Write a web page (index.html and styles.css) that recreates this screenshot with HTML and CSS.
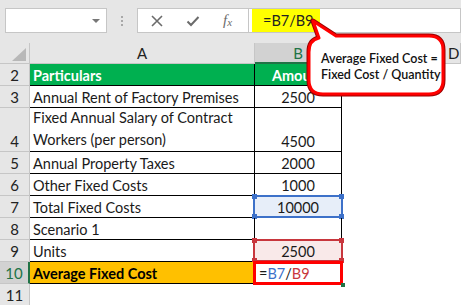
FILE: index.html
```html
<!DOCTYPE html>
<html>
<head>
<meta charset="utf-8">
<link rel="stylesheet" href="styles.css">
</head>
<body>
<div class="app">
  <div class="toolbar">
    <div class="namebox"><span class="dd"></span></div>
    <div class="dots"><i></i><i></i><i></i></div>
    <div class="iconbox">
      <svg class="ic" width="14" height="14" viewBox="0 0 14 14"><path d="M2 2 L12 12 M12 2 L2 12" stroke="#6b6b6b" stroke-width="1.6" fill="none"/></svg>
      <svg class="ic" width="14" height="14" viewBox="0 0 14 14"><path d="M1.5 7.5 L5 11 L12.5 3" stroke="#6b6b6b" stroke-width="2" fill="none"/></svg>
      <span class="fx">f<sub>x</sub></span>
    </div>
    <div class="formula"><span class="hl">=B7/B9</span></div>
  </div>
  <div class="sheet">
    <div class="corner"><span class="tri"></span></div>
    <div class="ch">A</div>
    <div class="ch sel">B</div>
    <div class="ch"></div>
    <div class="ch d">D</div>

    <div class="rh">2</div>
    <div class="c a green">Particulars</div>
    <div class="c b green ctr">Amount</div>
    <div class="e"></div><div class="e"></div>

    <div class="rh">3</div>
    <div class="c a">Annual Rent of Factory Premises</div>
    <div class="c b ctr">2500</div>
    <div class="e"></div><div class="e"></div>

    <div class="rh">4</div>
    <div class="c a two">Fixed Annual Salary of Contract<br>Workers (per person)</div>
    <div class="c b ctr">4500</div>
    <div class="e"></div><div class="e"></div>

    <div class="rh">5</div>
    <div class="c a">Annual Property Taxes</div>
    <div class="c b ctr">2000</div>
    <div class="e"></div><div class="e"></div>

    <div class="rh">6</div>
    <div class="c a">Other Fixed Costs</div>
    <div class="c b ctr">1000</div>
    <div class="e"></div><div class="e"></div>

    <div class="rh">7</div>
    <div class="c a">Total Fixed Costs</div>
    <div class="c b ctr ref blue">10000<i class="k tl"></i><i class="k tr"></i><i class="k bl"></i><i class="k br"></i></div>
    <div class="e"></div><div class="e"></div>

    <div class="rh">8</div>
    <div class="c a">Scenario 1</div>
    <div class="c b ctr"></div>
    <div class="e"></div><div class="e"></div>

    <div class="rh">9</div>
    <div class="c a">Units</div>
    <div class="c b ctr ref pink">2500<i class="k tl"></i><i class="k tr"></i><i class="k bl"></i><i class="k br"></i></div>
    <div class="e"></div><div class="e"></div>

    <div class="rh sel">10</div>
    <div class="c a orange">Average Fixed Cost</div>
    <div class="c b active">=<span class="cb">B7</span>/<span class="cr">B9</span><i class="fh"></i></div>
    <div class="e"></div><div class="e"></div>

    <div class="rh">11</div>
    <div class="e"></div><div class="e"></div><div class="e"></div><div class="e"></div>
  </div>

  <div class="callout">
    <svg class="bubble" width="461" height="305" viewBox="0 0 461 305">
      <path d="M336 36 L429 36 Q443 36 443 50 L443 80 Q443 94 429 94 L323 94 Q309 94 309 80 L309 52 Q309 40 319 38 L313 21 Z" fill="#fff" stroke="#9a0000" stroke-width="5" stroke-linejoin="round"/>
      <path d="M336 36 L429 36 Q443 36 443 50 L443 80 Q443 94 429 94 L323 94 Q309 94 309 80 L309 52 Q309 40 319 38 L313 21 Z" fill="#fff" stroke="#ff0000" stroke-width="3" stroke-linejoin="round"/>
    </svg>
    <div class="ctext">Average Fixed Cost =<br>Fixed Cost / Quantity</div>
  </div>
</div>
</body>
</html>
```

FILE: styles.css
```css
* { box-sizing: border-box; }
html, body { margin: 0; padding: 0; }
body {
  width: 461px;
  height: 305px;
  overflow: hidden;
  background: #fff;
  font-family: "Lato", "Liberation Sans", sans-serif;
}
.app { position: relative; width: 461px; height: 305px; overflow: hidden; }

.toolbar {
  height: 43px;
  background: #e6e6e6;
  padding: 8px 0 10px 5px;
  display: flex;
  align-items: stretch;
}
.namebox {
  width: 102px;
  background: #fff;
  border: 1px solid #c6c6c6;
  display: flex;
  justify-content: flex-end;
  align-items: center;
  padding-right: 6px;
}
.dd {
  width: 0; height: 0;
  border-left: 4px solid transparent;
  border-right: 4px solid transparent;
  border-top: 4px solid #777;
}
.dots {
  width: 30px;
  display: flex;
  flex-direction: column;
  align-items: center;
  justify-content: center;
  gap: 2px;
}
.dots i { width: 2px; height: 2px; background: #a8a8a8; display: block; }
.iconbox {
  width: 111px;
  background: #fff;
  border: 1px solid #c6c6c6;
  border-right: none;
  display: flex;
  align-items: center;
  padding-left: 12px;
  gap: 22px;
}
.fx {
  font-family: "Liberation Serif", serif;
  font-style: italic;
  font-size: 15px;
  color: #6b6b6b;
  margin-left: 1px;
}
.fx sub { font-size: 11px; vertical-align: -1px; }
.formula {
  flex: 1;
  background: #fff;
  border: 1px solid #c6c6c6;
  padding-left: 3px;
  display: flex;
}
.hl {
  background: #ffff00;
  width: 68px;
  padding-left: 11px;
  display: flex;
  align-items: center;
  font-size: 14.5px;
  color: #222;
}

.sheet {
  display: grid;
  grid-template-columns: 30px 225px 87px 80px 1fr;
  grid-template-rows: 21px 22px 22px 44px 22px 22px 22px 22px 22px 22px 22px;
  font-size: 14.5px;
  color: #1a1a1a;
}
.corner {
  background: #e6e6e6;
  border-right: 1px solid #c6c6c6;
  border-bottom: 1px solid #c6c6c6;
  position: relative;
}
.tri {
  position: absolute;
  right: 3px; bottom: 2px;
  width: 0; height: 0;
  border-left: 14px solid transparent;
  border-bottom: 13px solid #b8b8b8;
}
.ch {
  background: #e6e6e6;
  border-right: 1px solid #c6c6c6;
  border-bottom: 1px solid #c6c6c6;
  display: flex;
  align-items: center;
  justify-content: center;
  color: #222;
  font-size: 15px;
}
.ch.sel { background: #d2d2d2; color: #217346; border-bottom: 2px solid #217346; }
.ch.d { justify-content: flex-start; padding-left: 26px; }
.rh {
  background: #e6e6e6;
  border-right: 1px solid #c6c6c6;
  border-bottom: 1px solid #c6c6c6;
  display: flex;
  align-items: flex-end;
  justify-content: center;
  padding-bottom: 1px;
  font-size: 15px;
  color: #222;
}
.rh.sel { background: #d2d2d2; color: #217346; border-right: 2px solid #217346; }
.c {
  border-right: 1px solid #000;
  border-bottom: 1px solid #000;
  display: flex;
  align-items: flex-end;
  padding: 0 0 1px 3px;
  white-space: nowrap;
  overflow: hidden;
  position: relative;
}
.c.two { line-height: 22px; padding-bottom: 0; }
.c.ctr { justify-content: center; padding-left: 0; }
.green { background: #00b050; color: #fff; font-weight: bold; }
.orange { background: #ffc000; color: #000; font-weight: bold; }
.e { background: #fff; }

.ref { overflow: visible; }
.ref::before {
  content: "";
  position: absolute;
  left: -2px; top: -1px; right: -2px; bottom: -1px;
  border: 2px solid;
}
.blue { background: #e7eef9; }
.blue::before { border-color: #3d71c9; }
.pink { background: #f9e9e9; }
.pink::before { border-color: #c8363d; }
.k { position: absolute; width: 5px; height: 5px; display: block; }
.blue .k { background: #3d71c9; }
.pink .k { background: #c8363d; }
.k.tl { left: -3px; top: -2px; }
.k.tr { right: -3px; top: -2px; }
.k.bl { left: -3px; bottom: -2px; }
.k.br { right: -3px; bottom: -2px; }

.active { overflow: visible; padding-left: 4px; }
.active::before {
  content: "";
  position: absolute;
  left: -2px; top: -1px; right: -2px; bottom: -2px;
  border: 3px solid #ff0000;
}
.cb { color: #3d71c9; }
.cr { color: #c8363d; }
.fh {
  position: absolute;
  right: -4px; bottom: -4px;
  width: 4px; height: 4px;
  background: #217346;
  display: block;
}

.callout { position: absolute; left: 0; top: 0; width: 461px; height: 305px; pointer-events: none; }
.bubble { position: absolute; left: 0; top: 0; }
.ctext {
  position: absolute;
  left: 321px;
  top: 51px;
  font-size: 12.5px;
  line-height: 16px;
  color: #111;
  font-weight: 600;
}
```
